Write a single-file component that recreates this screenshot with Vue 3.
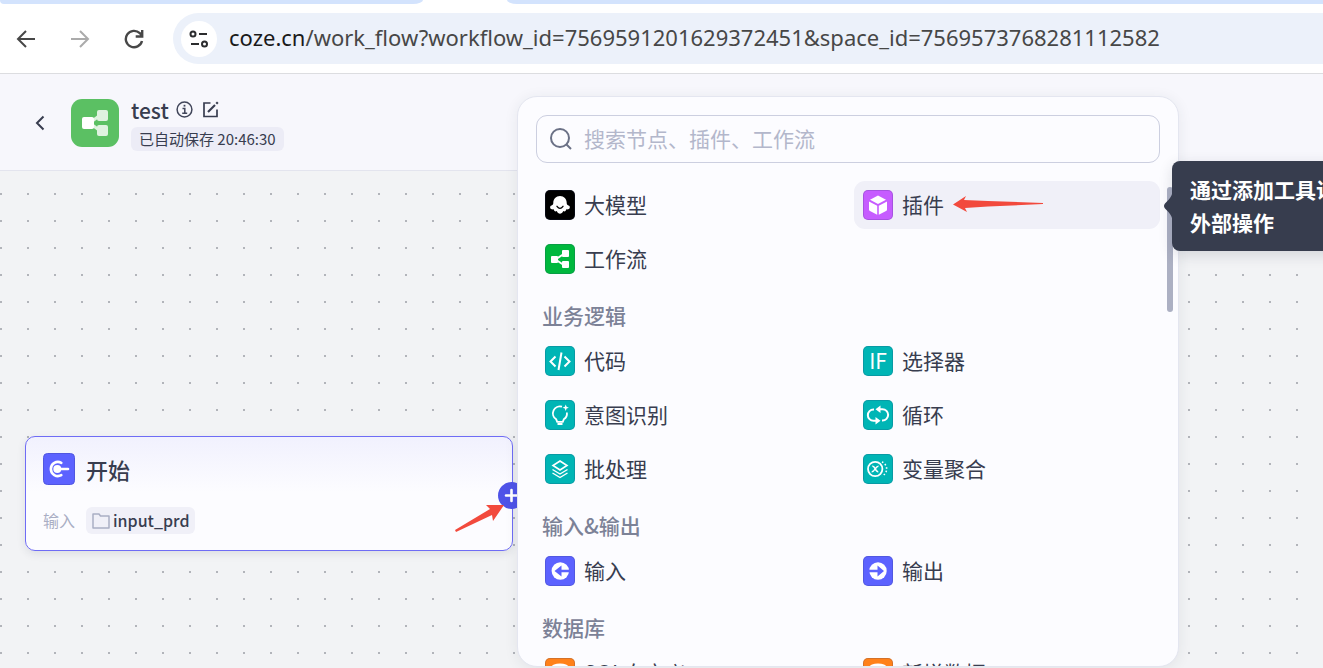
<script setup>
import { ref } from 'vue'

const keyword = ref('')

const groups = [
  {
    title: '',
    items: [
      { name: '大模型', icon: 'llm', tone: 'black' },
      { name: '插件', icon: 'plugin', tone: 'purple', active: true },
      { name: '工作流', icon: 'flow', tone: 'green' },
    ],
  },
  {
    title: '业务逻辑',
    items: [
      { name: '代码', icon: 'code', tone: 'teal' },
      { name: '选择器', icon: 'if', tone: 'teal' },
      { name: '意图识别', icon: 'bulb', tone: 'teal' },
      { name: '循环', icon: 'loop', tone: 'teal' },
      { name: '批处理', icon: 'batch', tone: 'teal' },
      { name: '变量聚合', icon: 'merge', tone: 'teal' },
    ],
  },
  {
    title: '输入&输出',
    items: [
      { name: '输入', icon: 'in', tone: 'indigo' },
      { name: '输出', icon: 'out', tone: 'indigo' },
    ],
  },
  {
    title: '数据库',
    items: [
      { name: 'SQL自定义', icon: 'db', tone: 'orange' },
      { name: '新增数据', icon: 'db', tone: 'orange' },
    ],
  },
]
</script>

<template>
  <div class="page">
    <div class="tabs"><i class="strip left"></i><i class="strip right"></i></div>
    <nav class="toolbar">
      <button class="nav-btn" aria-label="后退">
        <svg width="20" height="20" viewBox="0 0 20 20" fill="none" stroke="#474747" stroke-width="2"><path d="M19 10H2.5M10 2L2 10l8 8" /></svg>
      </button>
      <button class="nav-btn" aria-label="前进">
        <svg width="20" height="20" viewBox="0 0 20 20" fill="none" stroke="#ababab" stroke-width="2"><path d="M1 10h16.500M10 2l8 8-8 8" /></svg>
      </button>
      <button class="nav-btn" aria-label="刷新">
        <svg width="20" height="20" viewBox="0 0 20 20" fill="none" stroke="#474747" stroke-width="2.400"><path d="M18 12a8.200 8.200 0 1 1-2.200-7.800L18 6.500M18.200 1v6.500h-6.500" /></svg>
      </button>
      <div class="address">
        <button class="site" aria-label="网站信息">
          <svg width="20" height="18" viewBox="0 0 20 18" fill="none" stroke="#2b2c2e" stroke-width="2"><circle cx="4" cy="4" r="2.500" /><path d="M10 4h8M2 14h8" /><circle cx="15.500" cy="14" r="2.500" /></svg>
        </button>
        <div class="url" role="textbox" aria-label="地址"><b>coze.cn</b>/work_flow?workflow_id=7569591201629372451&amp;space_id=7569573768281112582</div>
      </div>
    </nav>

    <header class="head">
      <button class="back" aria-label="返回">
        <svg width="10" height="16" viewBox="0 0 10 16" fill="none" stroke="#383d4f" stroke-width="2"><path d="M8.500 1.500L2 8l6.500 6.500" /></svg>
      </button>
      <svg class="logo" width="48" height="48" viewBox="0 0 48 48">
        <rect width="48" height="48" rx="11" fill="#5bc063" />
        <path d="M20 23l8-6M20 25l8 6" stroke="#dff2e0" stroke-width="3" />
        <rect x="26" y="11" width="11" height="11" rx="2" fill="#dff2e0" />
        <rect x="26" y="26" width="11" height="11" rx="2" fill="#dff2e0" />
        <rect x="11" y="18" width="12" height="12" rx="2" fill="#fff" />
      </svg>
      <div class="meta">
        <div class="name-row">
          <h1>test</h1>
          <svg width="17" height="17" viewBox="0 0 17 17" fill="none" stroke="#41465a" stroke-width="1.500"><circle cx="8.500" cy="8.500" r="7.400" /><path d="M6.500 7.500h2.300v4.700M6.200 12.300h5" /><path d="M8.500 3.800v1.800" stroke-width="1.800" /></svg>
          <button class="edit" aria-label="编辑">
            <svg width="17" height="17" viewBox="0 0 17 17" fill="none" stroke="#383d4f" stroke-width="1.700"><path d="M8.500 2H2v13.500h13V8.500" /><path d="M6 11l7-7" stroke-width="2.200" /><path d="M14.300 2.700L15.800 1.200" stroke-width="2.200" /></svg>
          </button>
        </div>
        <span class="saved">已自动保存 20:46:30</span>
      </div>
    </header>

    <main class="canvas">
      <section class="node">
        <div class="node-title">
          <svg width="32" height="32" viewBox="0 0 32 32">
            <rect x=".5" y=".5" width="31" height="31" rx="4" fill="#5c62ff" stroke="#5056e0" />
            <path d="M18.300 9.900a7 7 0 1 0 0 12.200" fill="none" stroke="#fff" stroke-width="2.600" stroke-linecap="round" />
            <circle cx="14.300" cy="16" r="4" fill="#fff" />
            <path d="M15 16h10" stroke="#fff" stroke-width="2.600" stroke-linecap="round" />
          </svg>
          <h2>开始</h2>
        </div>
        <div class="node-inputs">
          <span class="label">输入</span>
          <span class="chip">
            <svg width="18" height="16" viewBox="0 0 18 16" fill="none" stroke="#a9aec4" stroke-width="1.500" stroke-linejoin="round"><path d="M1 1h6l1.500 2H17v12H1z" /></svg>
            input_prd
          </span>
        </div>
        <button class="plus" aria-label="添加节点">
          <svg width="27" height="27" viewBox="0 0 27 27"><circle cx="13.500" cy="13.500" r="13.500" fill="#4e53e8" /><path d="M13.500 8v11M8 13.500h11" stroke="#fff" stroke-width="2.600" stroke-linecap="round" /></svg>
        </button>
        <svg class="pointer" width="50" height="30" viewBox="0 0 50 30"><path d="M0 26L35 5 31 1 49 1 38 17 37 11 1 28z" fill="#f24a3d" /></svg>
      </section>
    </main>

    <aside class="panel">
      <label class="search">
        <svg width="24" height="24" viewBox="0 0 24 24" fill="none" stroke="#6b7186" stroke-width="2"><circle cx="11" cy="11" r="9" /><path d="M17 17l5 5" /></svg>
        <input v-model="keyword" type="text" placeholder="搜索节点、插件、工作流" aria-label="搜索节点、插件、工作流" />
      </label>
      <div class="list">
        <section v-for="(g, gi) in groups" :key="gi">
          <h3 v-if="g.title">{{ g.title }}</h3>
          <div class="grid">
            <button v-for="it in g.items" :key="it.name" class="item" :class="{ active: it.active }">
              <span class="tile" :class="it.tone">
                <svg width="30" height="30" viewBox="0 0 30 30" fill="none" stroke="#fff" stroke-width="2">
                  <g v-if="it.icon === 'llm'" fill="#fff" stroke="none">
                    <path d="M15 6c-4 0-6.700 3-6.700 6.800 0 1.500-.4 2.300-1.800 2.600-2 .6-1.700 3.400.3 3.900.8.200 1.500.1 2.100-.1.100 1.900 1.500 2.700 2.900 1.900.6 1.900 1.900 2.600 3.200 2.600s2.600-.7 3.200-2.600c1.400.8 2.800 0 2.900-1.900.6.2 1.300.3 2.100.1 2-.5 2.300-3.300.3-3.900-1.400-.3-1.800-1.100-1.800-2.600C21.700 9 19 6 15 6z" />
                    <path d="M12 16.300q3 4 6 0" fill="none" stroke="#000" stroke-width="1.300" stroke-linecap="round" />
                  </g>
                  <g v-else-if="it.icon === 'plugin'" fill="#fff" stroke="none">
                    <path d="M15 5.500l8 4.200-8 4.300-8-4.300z" /><path d="M6 11.500l8.200 4.200v9L7 21c-.7-.4-1-.9-1-1.600zM24 11.500l-8.200 4.200v9L23 21c.7-.4 1-.9 1-1.600z" />
                  </g>
                  <g v-else-if="it.icon === 'flow'" fill="#fff" stroke="none">
                    <path d="M12 14.500l6-4M12 16.500l6 4" stroke="#fff" stroke-width="2" />
                    <rect x="6" y="12" width="7" height="7" rx="1" /><rect x="17" y="6" width="7" height="7" rx="1" /><rect x="17" y="17" width="7" height="7" rx="1" />
                  </g>
                  <g v-else-if="it.icon === 'code'"><path d="M10.500 10.500L5.500 15.500l5 5M19.500 10.500l5 5-5 5M16.500 6.500L13.500 24" /></g>
                  <text v-else-if="it.icon === 'if'" x="15" y="23" text-anchor="middle" fill="#fff" stroke="none">IF</text>
                  <g v-else-if="it.icon === 'bulb'">
                    <path d="M17 6.700a7 7 0 0 0-5.800 12.600l1 2.500h5.600l1-2.500a7 7 0 0 0 3.100-6.800" stroke-width="1.800" /><path d="M12.500 24h5" />
                    <path d="M20.700 4.500l.9 2.300 2.300.9-2.300.9-.9 2.300-.9-2.300-2.300-.9 2.300-.9z" fill="#fff" stroke="none" />
                  </g>
                  <g v-else-if="it.icon === 'batch'" stroke-width="1.600"><path d="M15 7l7 4.500-7 4.500-7-4.500z" /><path d="M7.500 15.500L15 20l7.500-4.500M7.500 19L15 23.500l7.500-4.500" stroke-width="1.400" /></g>
                  <g v-else-if="it.icon === 'loop'">
                    <path d="M11 9.500H10.500a5.500 5.500 0 0 0 0 11.300H14M19 20.500h.5a5.500 5.500 0 0 0 0-11.300H16" />
                    <path d="M17.500 5.500v7.500L12.500 9.300zM12.500 17v7.500l5-3.700z" fill="#fff" stroke="none" />
                  </g>
                  <g v-else-if="it.icon === 'merge'">
                    <circle cx="12.200" cy="15" r="7.200" stroke-width="1.800" /><path d="M9.300 12.300c3-1 2.500 5.600 6 5.400M15.500 12.300c-2.500-.5-4 5.700-6.800 5.400" stroke-width="1.500" />
                    <path d="M17.500 8a7.600 7.600 0 0 1 0 14" stroke-width="1.600" stroke-dasharray="1.500 2" transform="translate(1.500)" />
                  </g>
                  <g v-else-if="it.icon === 'in'"><circle cx="15.300" cy="15" r="8.700" fill="#fff" stroke="none" /><path d="M9.500 15L16.500 9.500V13.800H25v2.400H16.500V20.500z" fill="#5c62ff" stroke="none" /></g>
                  <g v-else-if="it.icon === 'out'"><circle cx="15" cy="15" r="8.700" fill="#fff" stroke="none" /><path d="M21 15L14.500 9.500V13.800H5v2.400h9.500V20.500z" fill="#5c62ff" stroke="none" /></g>
                  <g v-else><ellipse cx="15" cy="9" rx="8.500" ry="3.500" fill="#fff" stroke="none" /><path d="M7.500 13v8c0 4 15 4 15 0v-8" /></g>
                </svg>
              </span>
              <span class="name">{{ it.name }}</span>
              <svg v-if="it.active" class="mark" width="90" height="16" viewBox="0 0 90 16"><path d="M0 8.500L13 0 11 4 35 5 90 7V8L35 10.500 12 12 14 16z" fill="#f24a3d" /></svg>
              <span v-if="it.active" class="tip" role="tooltip">
                <svg class="beak" width="10" height="32" viewBox="0 0 10 32"><path d="M10 0C9 6 7 9 2 13.500q-2 2.500 0 5C7 23 9 26 10 32z" fill="#373d4e" /></svg>
                通过添加工具访问<br />外部操作
              </span>
            </button>
          </div>
        </section>
      </div>
      <i class="thumb"></i>
    </aside>
  </div>
</template>

<style>
html, body { margin: 0; }
</style>

<style scoped>
.page {
  position: relative;
  display: flex;
  flex-direction: column;
  height: 100vh;
  overflow: hidden;
  background: #f2f3f5;
  color: #383d4f;
  font-family: "Noto Sans CJK SC", "Noto Sans", sans-serif;
}
* { box-sizing: border-box; }
button { border: 0; padding: 0; background: none; font: inherit; color: inherit; cursor: pointer; }
h1, h2, h3 { margin: 0; }
svg { display: block; flex: none; }

.tabs { display: flex; gap: 84px; height: 4px; background: #fff; flex: none; }
.strip { background: #d3e3fd; }
.strip.left { width: 32%; border-bottom-right-radius: 10px 4px; border-bottom-left-radius: 4px; }
.strip.right { flex: 1; border-bottom-left-radius: 10px 4px; }

.toolbar {
  display: flex;
  align-items: center;
  flex: none;
  height: 70px;
  padding-left: 16px;
  gap: 34px;
  background: #fff;
  border-bottom: 1px solid #dcdde0;
}
.nav-btn { display: flex; }
.address {
  display: flex;
  align-items: center;
  flex: 1;
  min-width: 0;
  height: 51px;
  margin-left: -5px;
  padding-left: 8px;
  gap: 12px;
  border-radius: 26px 0 0 26px;
  background: #ecf1fa;
}
.site { display: flex; align-items: center; justify-content: center; width: 36px; height: 36px; border-radius: 50%; background: #fff; flex: none; }
.url { padding-bottom: 3px; font: 22px/32px "Noto Sans", sans-serif; color: #474747; white-space: nowrap; }
.url b { font-weight: 400; color: #1a1a1a; }

.head {
  display: flex;
  align-items: center;
  flex: none;
  height: 97px;
  padding: 2px 0 0 35px;
  background: #f7f7fc;
  border-bottom: 1px solid #e3e4ee;
}
.back { display: flex; margin-right: 26px; }
.meta { display: flex; flex-direction: column; align-items: flex-start; margin-left: 12px; }
.name-row { display: flex; align-items: center; height: 28px; gap: 7px; }
.name-row h1 { font-size: 21px; line-height: 28px; font-weight: 500; }
.edit { display: flex; margin-left: 2px; }
.saved { margin-top: 3px; padding: 0 8px; border-radius: 6px; background: #ececf6; font-size: 15px; line-height: 24px; }

.canvas {
  position: relative;
  flex: 1;
  background: #f2f3f5 radial-gradient(circle at 1px 1px, #b2b4ba 0, #b2b4ba 1px, transparent 1px) 0 22px / 27px 27px;
}
.node {
  position: absolute;
  left: 25px;
  top: 265px;
  width: 488px;
  height: 115px;
  padding: 16px 17px;
  border: 1px solid #6f6cf5;
  border-radius: 10px;
  background: linear-gradient(#f1f1fe, #fcfcff 55px);
  box-shadow: 0 3px 8px rgba(40, 45, 70, .1);
}
.node-title { display: flex; align-items: center; gap: 11px; height: 32px; }
.node-title h2 { font-size: 22px; line-height: 32px; font-weight: 500; }
.node-inputs { display: flex; align-items: center; gap: 11px; margin-top: 22px; }
.label { font-size: 16px; line-height: 27px; color: #a9aec4; }
.chip { display: flex; align-items: center; gap: 3px; padding: 0 6px; border-radius: 6px; background: #f0f0f8; font-size: 16px; line-height: 27px; font-weight: 500; }
.plus { position: absolute; right: -13px; top: 45px; }
.pointer { position: absolute; right: 7px; top: 67px; }

.panel {
  position: absolute;
  left: 517px;
  right: 144px;
  top: 96px;
  bottom: 1px;
  padding: 18px;
  border: 1px solid #e4e6f0;
  border-radius: 20px;
  background: #fcfcff;
  box-shadow: 0 2px 14px rgba(40, 45, 70, .08);
}
.search {
  display: flex;
  align-items: center;
  gap: 11px;
  height: 48px;
  padding: 0 12px;
  border: 1px solid #cccfe0;
  border-radius: 11px;
}
.search input { flex: 1; min-width: 0; height: 32px; margin-bottom: 2px; border: 0; padding: 0; outline: 0; background: none; font: inherit; font-size: 21px; line-height: 32px; color: #383d4f; }
.search input::placeholder { color: #b3b7cb; opacity: 1; }
.list {
  position: relative;
  z-index: 1;
  box-sizing: content-box;
  height: calc(100% - 48px);
  margin-bottom: -18px;
  padding-top: 18px;
  clip-path: inset(-20px -200px 0 -18px);
}
.grid { display: grid; grid-template-columns: 1fr 1fr; gap: 6px 12px; }
.list h3 { padding: 18px 6px 8px; font-size: 21px; line-height: 28px; font-weight: 500; color: #7c8297; }
.item { position: relative; display: flex; align-items: center; gap: 9px; height: 48px; padding: 0 9px; border-radius: 11px; font-size: 21px; line-height: 32px; text-align: left; white-space: nowrap; }
.item.active { background: #f0f0f8; }
.name { padding-bottom: 2px; }
.tile { display: flex; width: 30px; height: 30px; border-radius: 5px; box-shadow: inset 0 0 0 1px rgba(40, 50, 100, .2); }
.tile svg { overflow: visible; }
.tile text { font-size: 21px; font-family: "Noto Sans CJK SC", sans-serif; }
.black { background: #000; }
.purple { background: #c65cff; }
.green { background: #00b83e; }
.teal { background: #00b5b5; }
.indigo { background: #5c62ff; }
.orange { background: #ff811a; }
.mark { position: absolute; left: 99px; top: 15px; }
.tip {
  position: absolute;
  z-index: 2;
  left: calc(100% + 12px);
  top: -20px;
  padding: 12px 18px;
  border-radius: 8px;
  background: #373d4e;
  color: #fff;
  font-weight: 700;
  line-height: 33px;
  box-shadow: 0 4px 14px rgba(40, 45, 70, .15);
}
.beak { position: absolute; left: -9px; top: 29px; }
.thumb { position: absolute; right: 5px; top: 90px; width: 6px; height: 125px; border-radius: 3px; background: #acb0c3; }
</style>
